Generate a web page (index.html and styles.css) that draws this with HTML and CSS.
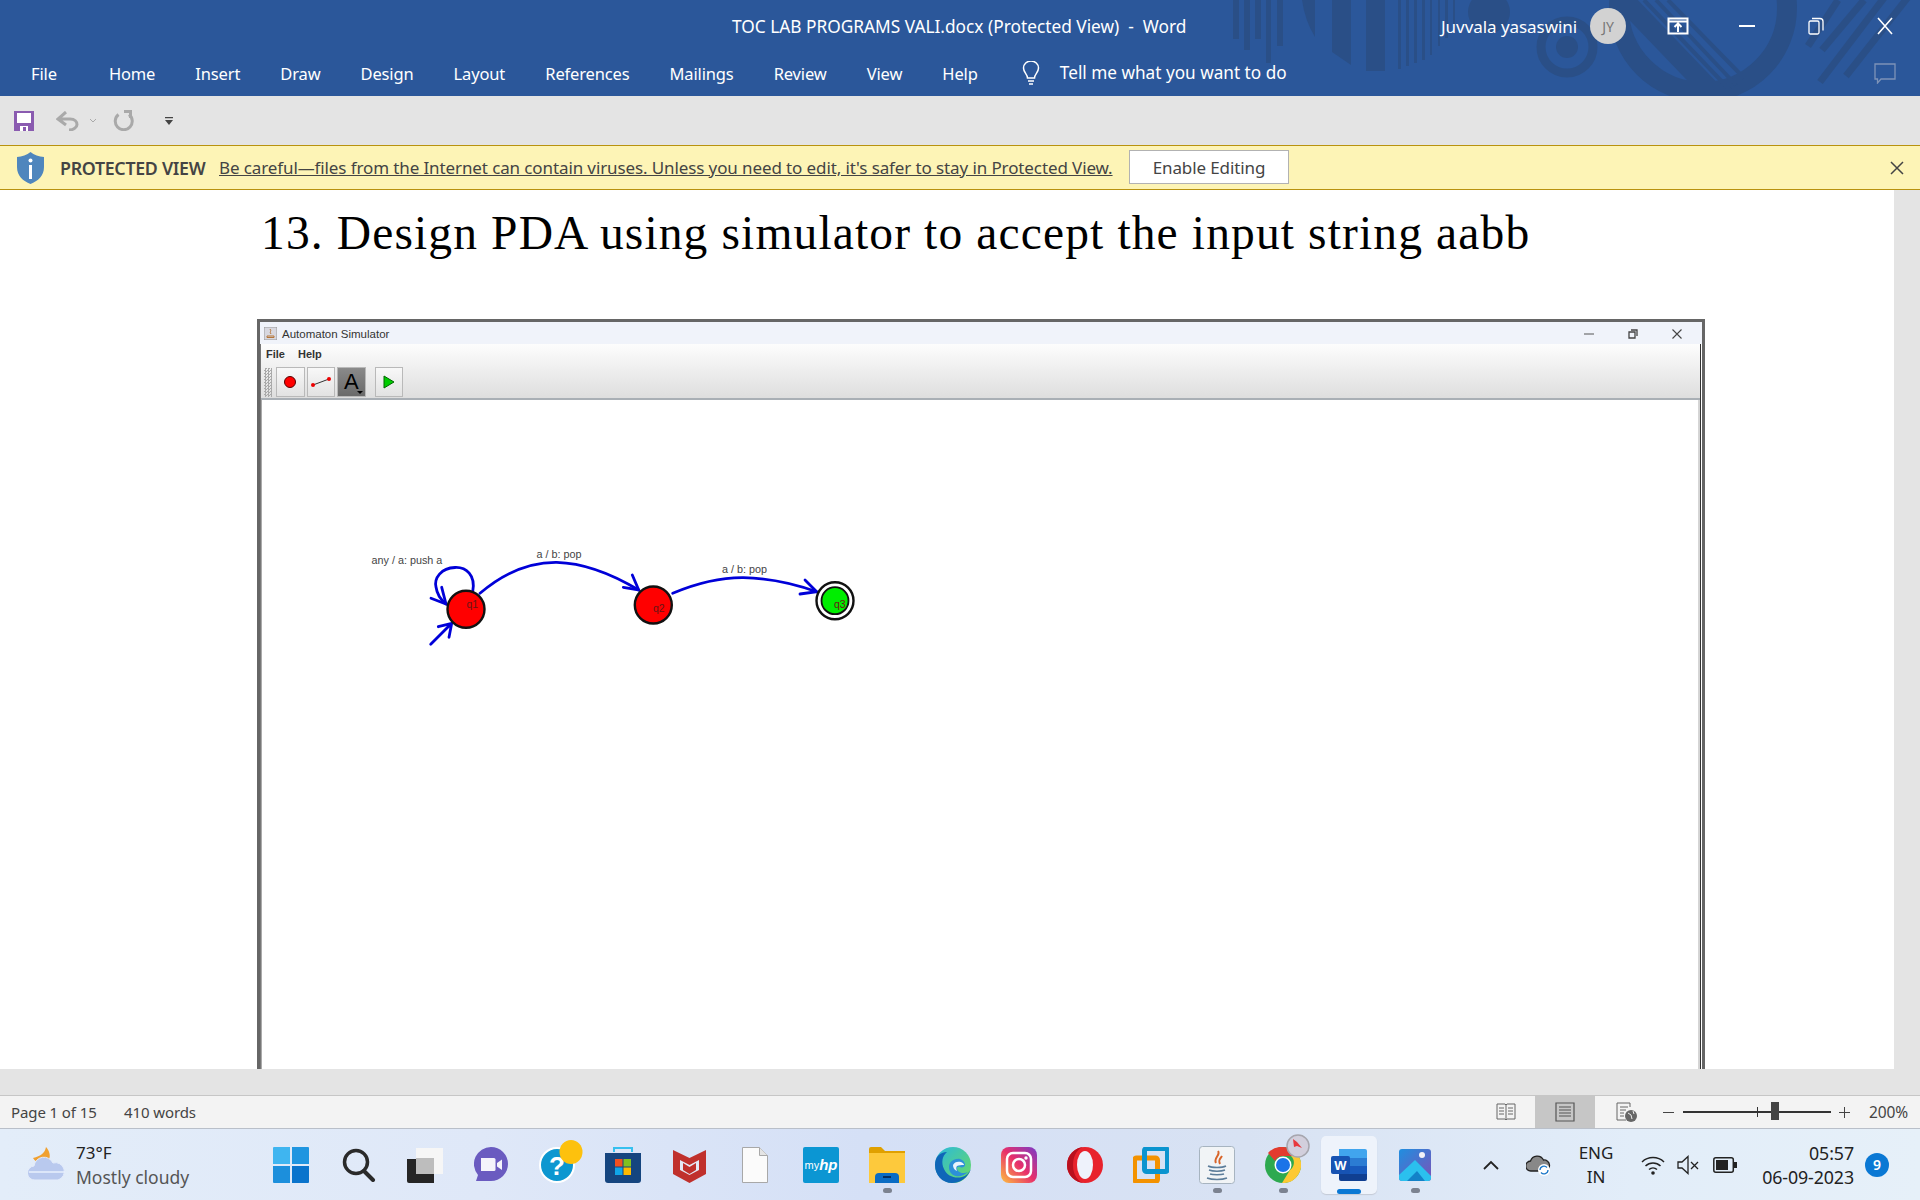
FILE: index.html
```html
<!DOCTYPE html>
<html lang="en">
<head>
<meta charset="utf-8">
<title>TOC LAB PROGRAMS VALI.docx (Protected View) - Word</title>
<link rel="stylesheet" href="styles.css">
</head>
<body>
<div class="screen">
  <header class="ribbon">
    <svg class="decor" viewBox="0 0 720 96" width="720" height="96">
      <g fill="#2a4f87">
        <rect x="33" y="0" width="6" height="39"/><rect x="44" y="0" width="6" height="50"/><rect x="55" y="0" width="6" height="39"/><rect x="66" y="0" width="5" height="63"/><rect x="77" y="0" width="6" height="46"/>
        <path d="M102 0h13v37q-10-16-13-37z"/>
        <path d="M132 0h19v65l-19-13z"/><rect x="166" y="0" width="19" height="71"/>
        <rect x="198" y="0" width="3" height="69"/><rect x="206" y="0" width="3" height="66"/><rect x="214" y="0" width="3" height="63"/><rect x="222" y="0" width="3" height="60"/><rect x="230" y="0" width="2" height="55"/><rect x="238" y="0" width="2" height="46"/><rect x="245" y="0" width="3" height="38"/><rect x="253" y="0" width="2" height="30"/>
        <circle cx="289" cy="12" r="21"/>
      </g>
      <circle cx="367" cy="47" r="26" fill="none" stroke="#2a4f87" stroke-width="9"/>
      <circle cx="367" cy="47" r="11" fill="#2a4f87"/>
      <circle cx="503" cy="8" r="84" fill="none" stroke="#2a4f87" stroke-width="20"/>
      <g stroke="#2a4f87" fill="none">
        <path d="M424 0l92 96" stroke-width="20"/>
        <path d="M444 0l86 90M456 0l80 85M468 0l76 78" stroke-width="4"/>
        <path d="M608 46L638 0M622 50L664 0" stroke-width="7"/>
        <path d="M620 82L690 -10M646 76L712 -8" stroke-width="7"/>
      </g>
    </svg>
    <div class="title-row">
      <span class="doc-title">TOC LAB PROGRAMS VALI.docx (Protected View)&nbsp; -&nbsp; Word</span>
      <div class="account">
        <span class="user-name">Juvvala yasaswini</span>
        <span class="avatar">JY</span>
        <svg class="win-btn first" width="22" height="18" viewBox="0 0 22 18"><path d="M1.500 1.500h19v15h-19zM1.500 4.500h19M11 15V7M7.500 10l3.500-3.500 3.500 3.500" fill="none" stroke="#fff" stroke-width="2"/></svg>
        <svg class="win-btn btn-min" width="18" height="4" viewBox="0 0 18 4"><path d="M1 2h16" stroke="#fff" stroke-width="2"/></svg>
        <svg class="win-btn btn-max" width="16" height="18" viewBox="0 0 16 18"><path d="M1 5.500q0-1.500 1.500-1.500h7q1.500 0 1.500 1.500v10q0 1.500-1.500 1.500h-7q-1.500 0-1.500-1.500zM4 1.500h8q3 0 3 3v9" fill="none" stroke="#fff" stroke-width="1.300"/></svg>
        <svg class="win-btn btn-close" width="18" height="18" viewBox="0 0 18 18"><path d="M2 1l14 16M16 1L2 17" stroke="#fff" stroke-width="1.600"/></svg>
      </div>
    </div>
    <nav class="tabs">
      <span class="tab tab-file">File</span>
      <span class="tab">Home</span>
      <span class="tab">Insert</span>
      <span class="tab">Draw</span>
      <span class="tab">Design</span>
      <span class="tab">Layout</span>
      <span class="tab">References</span>
      <span class="tab">Mailings</span>
      <span class="tab">Review</span>
      <span class="tab">View</span>
      <span class="tab">Help</span>
      <svg class="bulb" width="18" height="24" viewBox="0 0 18 24"><path d="M5.500 17c0-4-4-5.500-4-10a7.500 7 0 0 1 15 0c0 4.500-4 6-4 10zM6 20h6M7 23h4" fill="none" stroke="#fff" stroke-width="1.500"/></svg>
      <span class="tell">Tell me what you want to do</span>
      <svg class="comment" width="22" height="21" viewBox="0 0 22 21"><path d="M1 1h20v15H7l-3.500 4V16H1z" fill="none" stroke="#7d93b8" stroke-width="1.300"/></svg>
    </nav>
  </header>

  <div class="qat">
    <svg width="20" height="20" viewBox="0 0 20 20"><path d="M0 0h20v20H0z" fill="#8a5bb0"/><path d="M3 2h14v10H3z" fill="#fff"/><path d="M6 15h8v5H6z" fill="#fff"/><path d="M9 16h3v4H9z" fill="#8a5bb0"/></svg>
    <svg class="q-undo" width="23" height="20" viewBox="0 0 23 20"><path d="M10 1L2 8l8 6M3 8h11c5 0 7 3 7 5.500S18 19 13 19" fill="none" stroke="#a9a9a9" stroke-width="3"/></svg>
    <svg class="q-caret" width="8" height="5" viewBox="0 0 8 5"><path d="M1 1l3 3 3-3" fill="none" stroke="#a9a9a9"/></svg>
    <svg class="q-redo" width="21" height="21" viewBox="0 0 21 21"><path d="M5.500 4.500a8.500 8.500 0 1 0 10.500 0M11 1.500h6.500V8" fill="none" stroke="#a9a9a9" stroke-width="3"/></svg>
    <svg class="q-more" width="8" height="8" viewBox="0 0 8 8"><path d="M0 0h8v1.200H0zM0 3h8L4 8z" fill="#444"/></svg>
  </div>

  <div class="protected">
    <svg class="shield" width="27" height="32" viewBox="0 0 27 32"><path d="M13.500 0C10 3 5 4.500 0 5v10c0 9 6 14 13.500 17C21 29 27 24 27 15V5C22 4.500 17 3 13.500 0z" fill="#4f86bd"/><circle cx="13.500" cy="8.500" r="2" fill="#fff"/><path d="M12 13h3v14h-3z" fill="#fff"/></svg>
    <span class="pv-label">PROTECTED VIEW</span>
    <span class="pv-msg">Be careful—files from the Internet can contain viruses. Unless you need to edit, it's safer to stay in Protected View.</span>
    <span class="pv-btn">Enable Editing</span>
    <svg class="pv-close" width="16" height="16" viewBox="0 0 16 16"><path d="M2 2l12 12M14 2L2 14" stroke="#444" stroke-width="1.500"/></svg>
  </div>

  <main class="workspace">
    <article class="page">
      <h1 class="heading">13. Design PDA using simulator to accept the input string aabb</h1>
      <section class="sim">
        <div class="sim-title">
          <svg class="sim-icon" width="13" height="13" viewBox="0 0 13 13"><rect width="13" height="13" fill="#d8d8e0" stroke="#999"/><path d="M6 2c2 2-1 3 1 5M3 9h7v1.500H3z" fill="none" stroke="#b5763a"/></svg>
          <span class="sim-name">Automaton Simulator</span>
          <svg class="sim-ctl" width="10" height="2" viewBox="0 0 10 2"><path d="M0 1h10" stroke="#555"/></svg>
          <svg class="sim-ctl" width="10" height="10" viewBox="0 0 10 10"><path d="M1 3h6v6H1zM3 1h6v6" fill="none" stroke="#444" stroke-width="1.300"/></svg>
          <svg class="sim-ctl" width="10" height="10" viewBox="0 0 10 10"><path d="M.5.500l9 9M9.500.500l-9 9" stroke="#444" stroke-width="1.100"/></svg>
        </div>
        <div class="sim-body">
          <div class="sim-chrome">
            <div class="sim-menu"><span>File</span><span>Help</span></div>
            <div class="sim-tools">
              <span class="grip"></span>
              <span class="tool"><svg width="14" height="14" viewBox="0 0 14 14"><circle cx="7" cy="7" r="5.500" fill="#f00" stroke="#500"/></svg></span>
              <span class="tool"><svg width="22" height="14" viewBox="0 0 22 14"><path d="M3 10L19 4" stroke="#333"/><circle cx="3" cy="10" r="2" fill="#e00"/><circle cx="19" cy="4" r="2" fill="#e00"/></svg></span>
              <span class="tool tool-on">A<i class="tool-tri"></i></span>
              <span class="tool tool-play"><svg width="12" height="14" viewBox="0 0 12 14"><path d="M1 1l10 6-10 6z" fill="#0c0" stroke="#060"/></svg></span>
            </div>
          </div>
          <svg class="canvas" viewBox="261 400 1439 669" width="1439" height="669">
            <path d="M1699 400V1069M261.500 400V1069" stroke="#aaa" fill="none"/>
            <g fill="none" stroke="#0000d8" stroke-width="2.800" stroke-linecap="round">
              <path d="M472.700 591.700C476 575 466 567 455 567.500C441 568 434 578 436 587C437 594 441 600 446 604"/>
              <path d="M441.700 587.300L446 604L431 598.300"/>
              <path d="M430.700 644.300L451.700 623.300M438.300 626.700L451.700 623.300L449 637.300"/>
              <path d="M480 593.300C505 572 530 562 556.700 562.300C585 563 612 574 638.700 590"/>
              <path d="M632.300 575L638.700 590L623.300 587.300"/>
              <path d="M672.700 593.300C695 584 720 577.500 743.300 577.700C768 578 795 584 816.700 591.700"/>
              <path d="M805 580L816.700 591.700L800 594"/>
            </g>
            <circle cx="466" cy="609.300" r="18.500" fill="#f00" stroke="#111" stroke-width="2.400"/>
            <circle cx="653.300" cy="605" r="18.500" fill="#f00" stroke="#111" stroke-width="2.400"/>
            <circle cx="835" cy="600.700" r="18.500" fill="#fff" stroke="#111" stroke-width="2.400"/>
            <circle cx="835" cy="600.700" r="13.500" fill="#0e0" stroke="#111" stroke-width="1.800"/>
            <g class="dia-label">
              <text x="371.500" y="564">any / a: push a</text>
              <text x="536.500" y="558">a / b: pop</text>
              <text x="722" y="573">a / b: pop</text>
            </g>
            <g class="dia-state">
              <text x="466.500" y="608">q1</text>
              <text x="653" y="611.500">q2</text>
              <text x="834" y="608">q3</text>
            </g>
          </svg>
        </div>
      </section>
    </article>
  </main>

  <div class="status">
    <span class="st-page">Page 1 of 15</span>
    <span class="st-words">410 words</span>
    <svg class="st-read" width="20" height="20" viewBox="0 0 20 20"><path d="M1 2h8l1 1 1-1h8v15h-8l-1 1-1-1H1zM10 3v15M3 6h5M3 9h5M3 12h5M12 6h5M12 9h5M12 12h5" fill="none" stroke="#666"/></svg>
    <span class="st-print"><svg width="20" height="20" viewBox="0 0 20 20"><path d="M1 1h18v18H1zM4 5h12M4 8h12M4 11h12M4 14h12" fill="none" stroke="#555" stroke-width="1.200"/></svg></span>
    <svg class="st-web" width="21" height="20" viewBox="0 0 21 20"><path d="M1 1h13v4M1 1v17h9M4 5h8M4 8h6M4 11h4M4 14h4" fill="none" stroke="#666"/><circle cx="15" cy="14" r="6" fill="#666"/><path d="M12 11l3 2 1 4M17 9l1 3" stroke="#eee" fill="none"/></svg>
    <span class="zoom-minus"></span>
    <span class="slider"><i class="slider-tick"></i><i class="slider-thumb"></i></span>
    <svg class="zoom-plus" width="11" height="11" viewBox="0 0 11 11"><path d="M0 5.500h11M5.500 0v11" stroke="#444"/></svg>
    <span class="st-zoom">200%</span>
  </div>

  <footer class="taskbar">
    <div class="weather">
      <svg width="38" height="36" viewBox="0 0 38 36"><path d="M18 0c-1 6-5 9-13 11 3 6 12 6 16 1 2-3 0-9-3-12z" fill="#f0a030"/><path d="M7 33a7 7 0 0 1-1-14 10 10 0 0 1 19-3 8.500 8.500 0 0 1 5 17z" fill="#b9c9ee" stroke="#e4ecfb"/><path d="M1 25h36" stroke="#e8effc" stroke-width="1.500"/></svg>
      <div class="weather-text"><span class="temp">73°F</span><span class="cond">Mostly cloudy</span></div>
    </div>
    <div class="apps">
      <span class="app app-win"><svg width="36" height="36" viewBox="0 0 36 36"><path d="M0 1q0-1 1-1h16v17H0z" fill="#3fb5f0"/><path d="M19 0h16q1 0 1 1v16H19z" fill="#1f95e0"/><path d="M0 19h17v17H1q-1 0-1-1z" fill="#1c8fdc"/><path d="M19 19h17v16q0 1-1 1H19z" fill="#0a74cc"/></svg></span>
      <span class="app"><svg width="34" height="34" viewBox="0 0 34 34"><circle cx="14" cy="14" r="11.500" fill="none" stroke="#2a2a2a" stroke-width="3.500"/><path d="M22 23l9 9" stroke="#2a2a2a" stroke-width="4" stroke-linecap="round"/></svg></span>
      <span class="app"><svg width="36" height="36" viewBox="0 0 36 36"><path d="M0 12h27v24H2q-2 0-2-2z" fill="#252525"/><path d="M9 1h27v26H9z" fill="#f6f6f6"/><path d="M9 11h18v16H9z" fill="#bdbdbd"/></svg></span>
      <span class="app"><svg width="34" height="36" viewBox="0 0 34 36"><path d="M17 0a17 17 0 0 1 0 34H2l2-6A17 17 0 0 1 17 0z" fill="#6a5bc0"/><path d="M7 11h13q1.500 0 1.500 1.500v10q0 1.500-1.500 1.500H7z" fill="#f4f3fb"/><path d="M23 16l5-3.500v10.500l-5-3.500z" fill="#f4f3fb"/></svg></span>
      <span class="app"><svg class="help-icon" width="38" height="38" viewBox="0 0 38 38"><circle cx="19" cy="19" r="17" fill="#0d97d0" stroke="#fff" stroke-width="2"/><text class="help-q" x="19" y="29">?</text><ellipse cx="33" cy="6" rx="11.500" ry="12" fill="#fdc10d"/></svg></span>
      <span class="app"><svg width="36" height="38" viewBox="0 0 36 38"><path d="M9 6V2h18v4" fill="none" stroke="#36c0ef" stroke-width="2"/><path d="M0 7h36v27q0 3-3 3H3q-3 0-3-3z" fill="#15457f"/><path d="M10 13h7.500v7.500H10z" fill="#f05020"/><path d="M18.500 13H26v7.500h-7.500z" fill="#80c020"/><path d="M10 21.500h7.500V29H10z" fill="#10a5e8"/><path d="M18.500 21.500H26V29h-7.500z" fill="#fdb900"/></svg></span>
      <span class="app"><svg width="33" height="36" viewBox="0 0 33 36"><path d="M0 3l16.500 8L33 3v24L16.500 36 0 27z" fill="#c0302c"/><path d="M7 13l9.500 5L26 13v10l-9.500 5L7 23z" fill="#e4e9f6"/><path d="M10 16l6.500 4 6.500-4v7l-6.500 4-6.500-4z" fill="#c0302c"/></svg></span>
      <span class="app"><svg width="26" height="36" viewBox="0 0 26 36"><path d="M.5.500h17l8 8v27H.5z" fill="#fbfbfb" stroke="#a8a8a8"/><path d="M17.500.500v8h8" fill="#e4e4e4" stroke="#a8a8a8"/></svg></span>
      <span class="app"><span class="hp-tile"><span class="hp-my">my</span><span class="hp-hp">hp</span></span></span>
      <span class="app app-run"><svg width="36" height="36" viewBox="0 0 36 36"><path d="M0 2q0-2 2-2h10l4 4h20v30H0z" fill="#e0a000"/><path d="M0 6h36v30H0z" fill="#fdc93c"/><path d="M6 30q0-4 4-4h16q4 0 4 4v6H6z" fill="#0a6cc4"/><path d="M14 30h8" stroke="#052e60" stroke-width="2"/></svg></span>
      <span class="app"><svg width="36" height="36" viewBox="0 0 36 36"><defs><linearGradient id="edgeA" x1="0" y1="0" x2="1" y2="1"><stop offset="0" stop-color="#29b8e0"/><stop offset="1" stop-color="#6bdc5f"/></linearGradient></defs><circle cx="18" cy="18" r="18" fill="url(#edgeA)"/><path d="M36 22c-3 8-10 14-19 14C7 36 0 28 0 18c0-8 5-13 12-13-5 4-6 11-3 17 3 7 11 10 18 8 4-1 7-4 9-8z" fill="#0f66b8"/><path d="M14 20c0-5 5-9 11-8 3 1 5 3 5 6 0 2-3 3-5 2-3-1-4 1-2 4 2 2 6 3 10 1-3 3-8 5-12 4-5-1-7-5-7-9z" fill="#2c8fd8"/><path d="M18 18c1-3 5-4 8-3 2 1 3 2 3 3-3 0-5 0-7 1-1 1-1 3 0 5-3-1-4-4-4-6z" fill="#e9f3fb"/></svg></span>
      <span class="app"><svg width="36" height="36" viewBox="0 0 36 36"><defs><linearGradient id="igA" x1="0" y1="1" x2="1" y2="0"><stop offset="0" stop-color="#fdc040"/><stop offset=".5" stop-color="#e8306a"/><stop offset="1" stop-color="#7a3bc8"/></linearGradient></defs><rect width="36" height="36" rx="8" fill="url(#igA)"/><rect x="6" y="6" width="24" height="24" rx="6" fill="none" stroke="#fff" stroke-width="2.500"/><circle cx="18" cy="18" r="6" fill="none" stroke="#fff" stroke-width="2.500"/><circle cx="25" cy="11" r="1.700" fill="#fff"/></svg></span>
      <span class="app"><svg width="36" height="36" viewBox="0 0 36 36"><circle cx="18" cy="18" r="18" fill="#e8222c"/><path d="M18 0a18 18 0 0 0 0 36a12 18 0 0 1 0-36z" fill="#b9101e"/><ellipse cx="18" cy="18" rx="8" ry="14" fill="#eef2fb"/></svg></span>
      <span class="app"><svg width="36" height="36" viewBox="0 0 36 36"><rect x="1.500" y="11" width="23" height="23.500" rx="2" fill="none" stroke="#f39200" stroke-width="5"/><rect x="11.500" y="1.500" width="23" height="23" rx="2" fill="none" stroke="#0b94cf" stroke-width="5"/></svg></span>
      <span class="app app-run"><svg width="36" height="38" viewBox="0 0 36 38"><rect x=".5" y=".5" width="35" height="37" rx="3" fill="#f1f4f6" stroke="#a7b4c0"/><path d="M19 5c3 4-5 7-2 12M23 10c-2 3-4 4-2 8" fill="none" stroke="#d8652a" stroke-width="2"/><path d="M9 20c4 2 14 2 18 0M10 24c4 1.500 12 1.500 16 0M11 28c3 1 11 1 14 0M8 32c5 2 15 2 20 0" fill="none" stroke="#5c7d9a" stroke-width="1.500"/></svg></span>
      <span class="app app-run chrome-slot"><svg width="36" height="36" viewBox="0 0 36 36"><circle cx="18" cy="18" r="18" fill="#2da94f"/><path d="M18 0a18 18 0 0 1 15.600 9H18a9 9 0 0 0-8 5L3 6A18 18 0 0 1 18 0z" fill="#e33b2e"/><path d="M33.600 9A18 18 0 0 1 17 36l8-13a9 9 0 0 0 1-14z" fill="#fcc934"/><circle cx="18" cy="18" r="8.500" fill="#fff"/><circle cx="18" cy="18" r="7" fill="#1a73e8"/></svg><svg class="chrome-badge" width="24" height="24" viewBox="0 0 24 24"><circle cx="12" cy="12" r="11" fill="#d2cfdc" stroke="#a6a6ae" stroke-width="1.500"/><path d="M7 5l4 3 5 6-5-2-3 1z" fill="#e8383c"/></svg></span>
      <span class="app app-word"><svg width="36" height="32" viewBox="0 0 36 32"><path d="M8 0h26q2 0 2 2v7H8z" fill="#41a5ee"/><path d="M8 9h28v8H8z" fill="#2b7cd3"/><path d="M8 17h28v8H8z" fill="#185abd"/><path d="M8 25h28v5q0 2-2 2H10q-2 0-2-2z" fill="#103f91"/><rect y="7" width="19" height="18" rx="2" fill="#1753b3"/><text class="word-w" x="9.500" y="21">W</text></svg></span>
      <span class="app app-run"><svg width="32" height="32" viewBox="0 0 32 32"><defs><linearGradient id="phA" x1="0" y1="0" x2="1" y2="1"><stop offset="0" stop-color="#1f8fe0"/><stop offset="1" stop-color="#7b52b8"/></linearGradient></defs><rect width="32" height="32" rx="3" fill="url(#phA)"/><circle cx="23" cy="6" r="3" fill="#f2f2f8"/><path d="M0 26L16 11l16 16v2q0 3-3 3H3q-3 0-3-3z" fill="#2bc0ee"/><path d="M8 32L18 22l8 10z" fill="#1382c8"/></svg></span>
    </div>
    <div class="tray">
      <svg class="tr-chev" width="16" height="10" viewBox="0 0 16 10"><path d="M1 9l7-7 7 7" fill="none" stroke="#222" stroke-width="1.800"/></svg>
      <svg class="tr-cloud" width="25" height="24" viewBox="0 0 25 24"><path d="M5 18a5 5 0 0 1-.500-10 7 7 0 0 1 13-1 5.500 5.500 0 0 1 1 11z" fill="#888" stroke="#222" stroke-width="1.300"/><circle cx="18" cy="17" r="6" fill="#fff"/><path d="M14 17a4 4 0 0 1 7-2.500M22 17a4 4 0 0 1-7 2.500" fill="none" stroke="#1a76c8" stroke-width="1.300"/></svg>
      <span class="tr-lang"><span>ENG</span><span>IN</span></span>
      <svg class="tr-wifi" width="24" height="20" viewBox="0 0 24 20"><path d="M1 7a16 16 0 0 1 22 0M4.500 11a11 11 0 0 1 15 0M8 14.500a6 6 0 0 1 8 0" fill="none" stroke="#222" stroke-width="1.500"/><circle cx="12" cy="18" r="1.800" fill="#222"/></svg>
      <svg class="tr-vol" width="23" height="20" viewBox="0 0 23 20"><path d="M1 7h4l6-5.500v17L5 13H1zM14 7l7 7M21 7l-7 7" fill="none" stroke="#222" stroke-width="1.300"/></svg>
      <svg class="tr-bat" width="24" height="16" viewBox="0 0 24 16"><rect x=".8" y=".8" width="19.500" height="14.400" rx="2" fill="none" stroke="#222" stroke-width="1.500"/><rect x="3" y="3" width="12" height="10" fill="#222"/><rect x="21" y="5" width="3" height="6" fill="#222"/></svg>
      <span class="tr-clock"><span>05:57</span><span>06-09-2023</span></span>
      <span class="tr-badge">9</span>
    </div>
  </footer>
</div>
</body>
</html>
```
FILE: styles.css
```css
* { box-sizing: border-box; }
html, body { margin: 0; padding: 0; }
body { width: 1920px; height: 1200px; overflow: hidden; font-family: "Noto Sans", "Open Sans", sans-serif; background: #fff; }
.screen { display: flex; flex-direction: column; width: 1920px; height: 1200px; }

/* ribbon */
.ribbon { position: relative; height: 96px; flex: none; background: #2b579a; color: #fff; overflow: hidden; }
.decor { position: absolute; left: 1200px; top: 0; }
.title-row { position: relative; height: 52px; display: flex; align-items: center; }
.doc-title { position: absolute; left: 732px; top: 15px; font-size: 17.300px; line-height: 24px; white-space: nowrap; }
.account { margin-left: 1441px; display: flex; align-items: center; height: 50px; }
.user-name { width: 149px; font-size: 17px; white-space: nowrap; letter-spacing: -0.05px; }
.avatar { width: 36px; height: 36px; border-radius: 50%; background: #d2d2d2; color: #777; font-size: 14px; display: flex; align-items: center; justify-content: center; }
.win-btn { flex: none; }
.win-btn.first { margin-left: 41px; }
.btn-min { margin-left: 49px; }
.btn-max { margin-left: 52px; }
.btn-close { margin-left: 52px; }
.tabs { position: relative; display: flex; align-items: center; height: 42px; padding-left: 31px; gap: 40.100px; font-size: 16.500px; letter-spacing: -0.15px; }
.tab { white-space: nowrap; }
.tab-file { margin-right: 12px; }
.bulb { margin-left: 4px; margin-right: -20px; }
.tell { white-space: nowrap; font-size: 17.200px; letter-spacing: 0; margin-bottom: 2px; }
.comment { margin-left: auto; margin-right: 24px; }

/* quick access toolbar */
.qat { height: 49px; flex: none; background: #e4e4e4; display: flex; align-items: center; padding-left: 14px; }
.q-undo { margin-left: 22px; }
.q-caret { margin-left: 10px; }
.q-redo { margin-left: 16px; }
.q-more { margin-left: 31px; }

/* protected view */
.protected { height: 45px; flex: none; background: #fdf4b6; border-top: 1px solid #b8920f; border-bottom: 1px solid #b8920f; display: flex; align-items: center; color: #444; padding-left: 17px; }
.pv-label { margin-left: 16px; font-size: 17.800px; font-weight: 600; letter-spacing: -0.3px; width: 159px; white-space: nowrap; }
.pv-msg { font-size: 17px; text-decoration: underline; white-space: nowrap; width: 910px; letter-spacing: -0.11px; }
.pv-btn { width: 160px; height: 34px; background: #fff; border: 1px solid #b2b2b2; font-size: 17px; display: flex; align-items: center; justify-content: center; letter-spacing: -0.1px; margin-top: -1px; }
.pv-close { margin-left: auto; margin-right: 15px; }

/* document */
.workspace { flex: 1; min-height: 0; background: #e4e4e4; overflow: hidden; padding-bottom: 26px; display: flex; }
.page { width: 1894px; height: 879px; background: #fff; overflow: hidden; padding-left: 257px; }
.heading { margin: 17px 0 0 4px; font-family: "Liberation Serif", serif; font-weight: 400; font-size: 47.500px; line-height: 52px; letter-spacing: 1.130px; color: #000; white-space: nowrap; }
.sim { width: 1448px; height: 760px; margin-top: 60px; border: 3px solid #666; border-bottom: none; background: #fff; font-family: "Liberation Sans", sans-serif; display: flex; flex-direction: column; }
.sim-title { height: 22px; flex: none; background: #f0f3fa; display: flex; align-items: center; padding-left: 4px; padding-top: 1px; color: #333; }
.sim-icon { flex: none; }
.sim-name { font-size: 11.500px; margin-left: 5px; flex: 1; }
.sim-ctl { flex: none; margin-right: 34px; }
.sim-ctl:last-child { margin-right: 20px; }
.sim-body { flex: 1; display: flex; flex-direction: column; border-left: 1px solid #777; border-right: 1px solid #333; margin-right: 1px; min-height: 0; }
.sim-chrome { height: 56px; flex: none; background: linear-gradient(#fdfdfd, #dedede); border-bottom: 2px solid #a9afb5; }
.sim-menu { display: flex; gap: 13px; height: 20px; align-items: center; padding-left: 5px; font-size: 11px; font-weight: 700; color: #333; }
.sim-tools { display: flex; align-items: center; gap: 2px; padding-left: 3px; padding-top: 3px; }
.grip { width: 8px; height: 29px; margin-right: 2px; background: repeating-conic-gradient(#aaa 0 25%, transparent 0 50%) 0 0 / 3px 3px; }
.tool { width: 28.500px; height: 30px; display: flex; align-items: center; justify-content: center; background: linear-gradient(#f8f8f8, #e2e2e2); border: 1px solid #b9b9b9; position: relative; }
.tool-on { background: linear-gradient(#8a8a8a, #6a6a6a); font-size: 22px; color: #000; }
.tool-tri { position: absolute; right: 2px; bottom: 2px; border: 3px solid transparent; border-top-color: #000; border-bottom: 0; }
.tool-play { margin-left: 7px; }
.canvas { display: block; flex: none; }
.dia-label text { font-family: "Liberation Sans", sans-serif; font-size: 10.800px; fill: #444; }
.dia-state text { font-family: "Liberation Sans", sans-serif; font-size: 10.500px; fill: #6a1515; }

/* status bar */
.status { height: 33px; flex: none; background: #f3f3f3; border-top: 1px solid #c6c6c6; display: flex; align-items: center; font-size: 15px; color: #444; padding-left: 11px; letter-spacing: -0.1px; }
.st-page { width: 113px; white-space: nowrap; }
.st-words { width: 1372px; white-space: nowrap; }
.st-print { width: 60px; height: 32px; background: #c6c6c6; margin-left: 19px; display: flex; align-items: center; justify-content: center; }
.st-read { flex: none; }
.st-web { margin-left: 21px; flex: none; }
.zoom-minus { width: 11px; height: 1px; background: #444; margin-left: 26px; }
.slider { position: relative; width: 148px; height: 2px; background: #333; margin-left: 9px; }
.slider-tick { position: absolute; left: 74px; top: -4px; width: 1px; height: 10px; background: #333; }
.slider-thumb { position: absolute; left: 88px; top: -9px; width: 8px; height: 18px; background: #444; }
.zoom-plus { margin-left: 8px; flex: none; }
.st-zoom { margin-left: 19px; white-space: nowrap; font-size: 15.500px; }

/* taskbar */
.taskbar { height: 72px; flex: none; border-top: 1px solid #b9bfc9; background: linear-gradient(90deg, #e3edf9 0%, #dfe8f8 25%, #d5e0f6 45%, #d8e2f3 65%, #e2edf9 85%, #e6f0f9 100%); display: flex; align-items: center; }
.weather { width: 258px; flex: none; display: flex; align-items: center; padding-left: 28px; gap: 10px; }
.weather-text { display: flex; flex-direction: column; }
.temp { font-size: 17px; line-height: 24px; color: #222; }
.cond { font-size: 17.500px; line-height: 24px; color: #555; white-space: nowrap; }
.apps { display: flex; flex: none; }
.app { position: relative; width: 66px; height: 71px; display: flex; align-items: center; justify-content: center; flex: none; }
.app-win { margin-right: 2px; }
.app-run::after { content: ""; position: absolute; left: 29px; bottom: 7px; width: 9px; height: 5px; border-radius: 3px; background: #7b8290; }
.app-word::before { content: ""; position: absolute; left: 5px; right: 5px; top: 7px; bottom: 6px; border-radius: 5px; background: #eef3fb; box-shadow: 0 1px 1px #c4cad6; }
.app-word svg { position: relative; }
.app-word::after { content: ""; position: absolute; left: 21px; bottom: 6px; width: 24px; height: 5px; border-radius: 3px; background: #0a78d4; }
.chrome-badge { position: absolute; left: 36px; top: 5px; }
.help-icon { overflow: visible; }
.hp-tile { width: 36px; height: 36px; background: #0b96d3; border-radius: 2px; display: flex; align-items: center; justify-content: center; color: #fff; font-family: "Liberation Sans", sans-serif; }
.hp-my { font-size: 11px; }
.hp-hp { font-size: 15px; font-weight: 700; font-style: italic; }
.help-q { font-family: "Liberation Sans", sans-serif; font-size: 26px; font-weight: 700; fill: #fff; text-anchor: middle; }
.word-w { font-family: "Liberation Sans", sans-serif; font-size: 13px; font-weight: 700; fill: #fff; text-anchor: middle; }
.tray { display: flex; align-items: center; position: relative; flex: none; margin-left: 35px; color: #222; height: 71px; }
.tr-cloud { margin-left: 27px; }
.tr-lang { margin-left: 27px; width: 36px; display: flex; flex-direction: column; align-items: center; font-size: 17px; line-height: 24px; }
.tr-wifi { margin-left: 27px; }
.tr-vol { margin-left: 12px; }
.tr-bat { margin-left: 13px; }
.tr-clock { margin-left: 19px; width: 98px; display: flex; flex-direction: column; align-items: flex-end; font-size: 17.800px; line-height: 24px; white-space: nowrap; letter-spacing: -0.1px; }
.tr-badge { margin-left: 11px; width: 24px; height: 24px; border-radius: 50%; background: #0a78d4; color: #fff; font-size: 14px; font-weight: 600; display: flex; align-items: center; justify-content: center; }
```
